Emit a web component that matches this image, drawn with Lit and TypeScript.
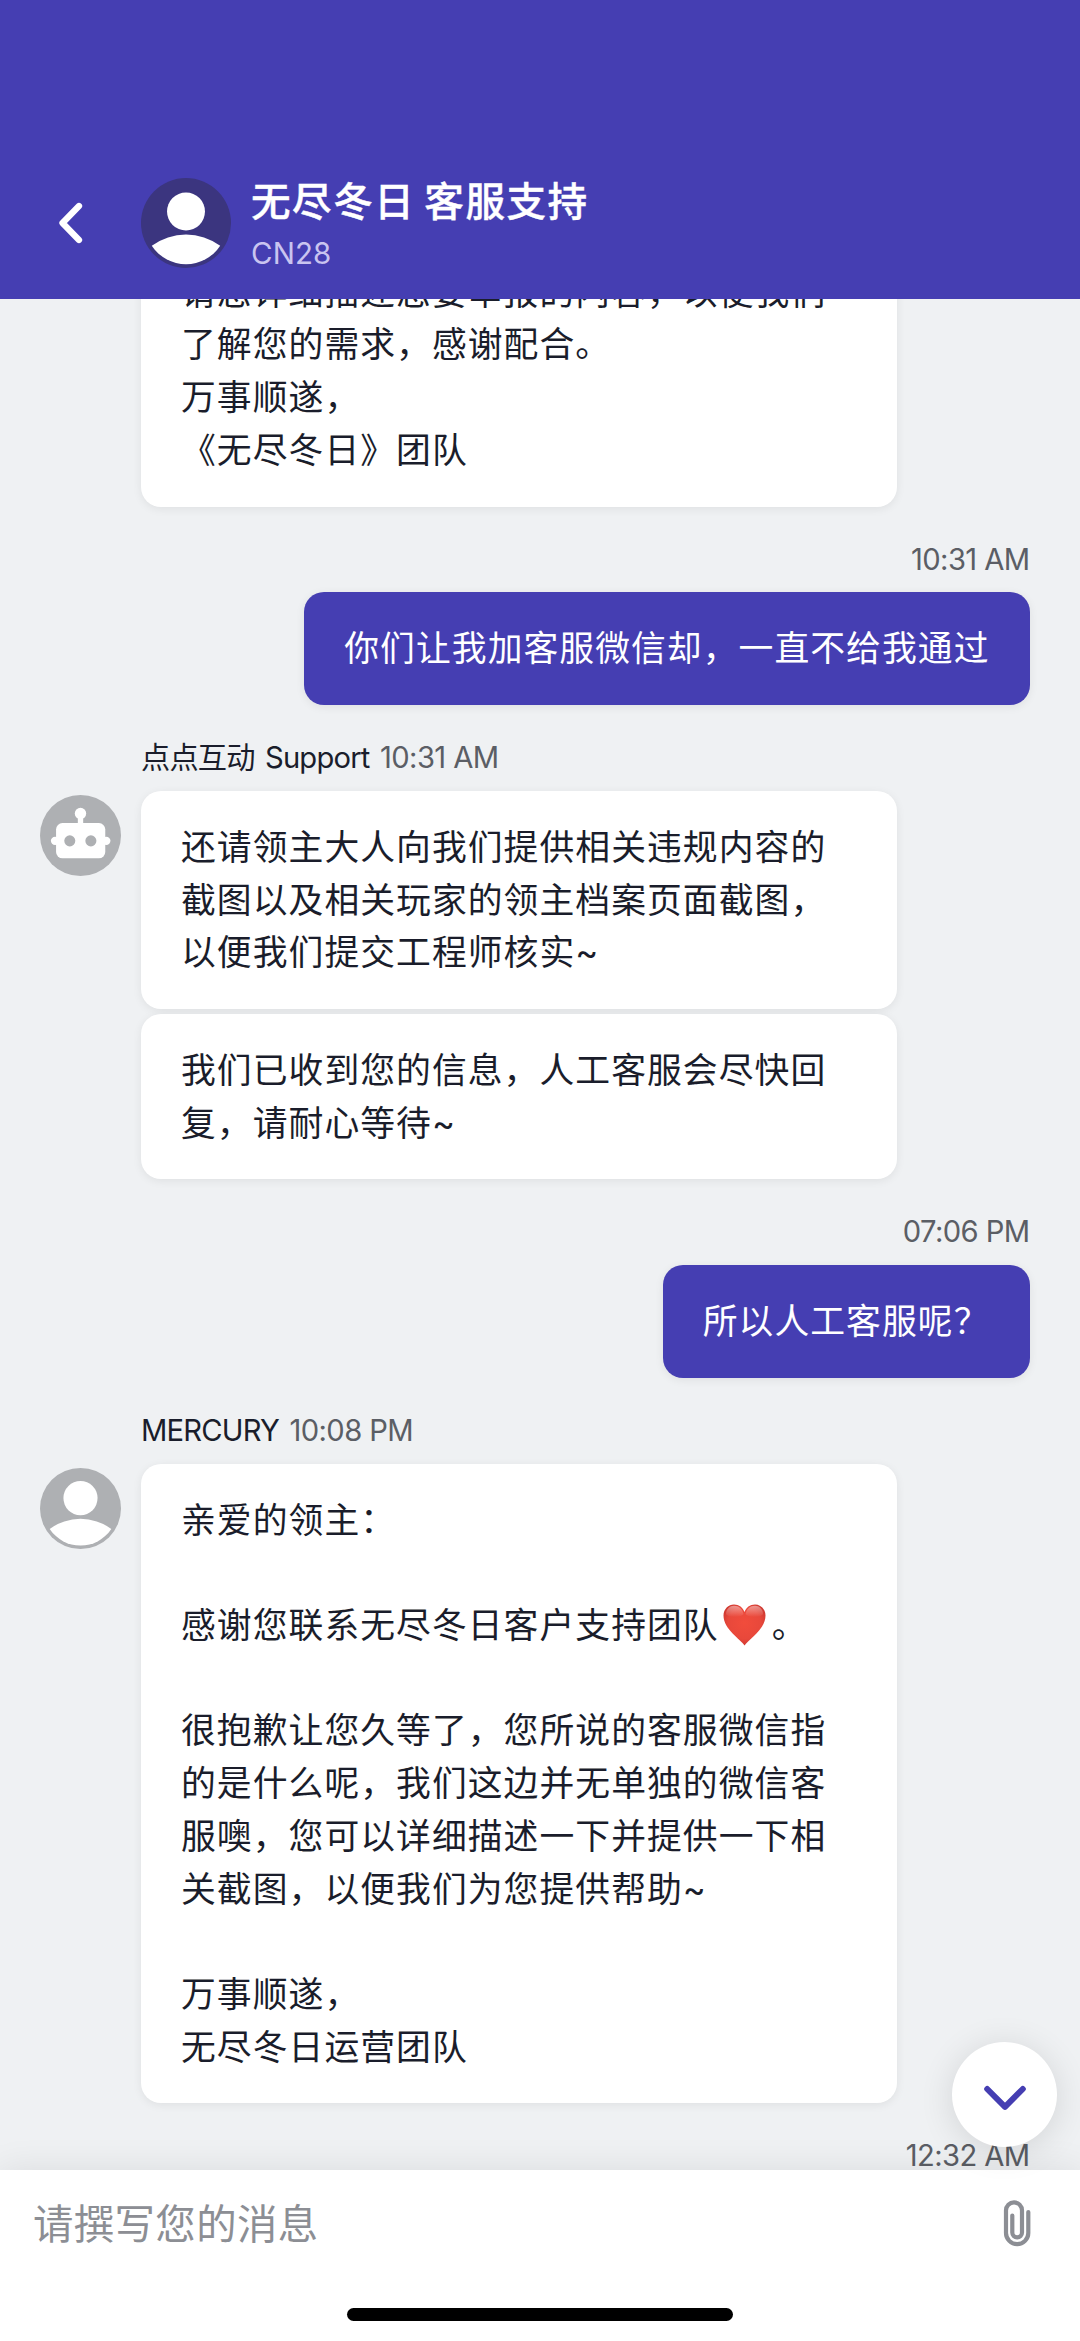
import { LitElement, html, svg, css, nothing } from "lit";
import { customElement, property } from "lit/decorators.js";

type AvatarKind = "bot" | "person";

interface MessageGroup {
  side: "in" | "out";
  author?: string;
  time: string;
  avatar?: AvatarKind;
  bubbles: string[];
}

const HEART = "\u2665";

const earlier = `请您详细描述您要举报的内容，以便我们
了解您的需求，感谢配合。
万事顺遂，
《无尽冬日》团队`;

const groups: MessageGroup[] = [
  { side: "out", time: "10:31 AM", bubbles: ["你们让我加客服微信却，一直不给我通过"] },
  {
    side: "in",
    author: "点点互动 Support",
    time: "10:31 AM",
    avatar: "bot",
    bubbles: [
      `还请领主大人向我们提供相关违规内容的
截图以及相关玩家的领主档案页面截图，
以便我们提交工程师核实~`,
      `我们已收到您的信息，人工客服会尽快回
复，请耐心等待~`,
    ],
  },
  { side: "out", time: "07:06 PM", bubbles: ["所以人工客服呢？"] },
  {
    side: "in",
    author: "MERCURY",
    time: "10:08 PM",
    avatar: "person",
    bubbles: [
      `亲爱的领主：

感谢您联系无尽冬日客户支持团队${HEART}。

很抱歉让您久等了，您所说的客服微信指
的是什么呢，我们这边并无单独的微信客
服噢，您可以详细描述一下并提供一下相
关截图，以便我们为您提供帮助~

万事顺遂，
无尽冬日运营团队`,
    ],
  },
  { side: "out", time: "12:32 AM", bubbles: [] },
];

const person = svg`
  <circle class="disc" cx="121" cy="121" r="121"/>
  <circle cx="121" cy="90" r="51" fill="#fff"/>
  <path d="M29 182A156 156 0 0 1 213 182A110 110 0 0 1 29 182Z" fill="#fff"/>`;

const bot = svg`
  <circle class="disc" cx="121" cy="121" r="121"/>
  <g fill="#fff">
    <circle cx="121" cy="55" r="17"/>
    <rect x="113" y="60" width="16" height="30"/>
    <rect x="48" y="84" width="147" height="105" rx="19"/>
    <circle cx="45" cy="137" r="12.5"/>
    <circle cx="198" cy="137" r="12.5"/>
  </g>
  <circle class="disc" cx="89" cy="137" r="16.5"/>
  <circle class="disc" cx="152" cy="137" r="16.5"/>`;

@customElement("chat-avatar")
export class ChatAvatar extends LitElement {
  @property() kind: AvatarKind = "person";

  static styles = css`
    :host { display: block; width: 81px; height: 81px; }
    svg { display: block; width: 100%; height: 100%; }
    .disc { fill: var(--disc, #aeb0b3); }
  `;

  render() {
    return html`<svg viewBox="0 0 242 242">${this.kind === "bot" ? bot : person}</svg>`;
  }
}

@customElement("chat-bubble")
export class ChatBubble extends LitElement {
  @property() text = "";

  static styles = css`
    :host {
      display: block;
      box-sizing: border-box;
      padding: 30px 40px;
      border-radius: 20px;
      background: #fff;
      color: #1a1d2b;
      box-shadow: 0 2px 10px rgba(0, 0, 0, 0.07);
      font-size: 34.8px;
      letter-spacing: 1.05px;
      line-height: 52.7px;
      white-space: pre;
    }
    .heart { width: 43px; height: 42px; margin: 0 6px 0 4px; vertical-align: -8px; }
  `;

  private heart() {
    return html`<svg class="heart" viewBox="0 0 43 42"><defs>
      <radialGradient id="red" cx="0.5" cy="0.45" r="0.6"><stop offset="0" stop-color="#f14c3c"/><stop offset="0.65" stop-color="#e8483b"/><stop offset="1" stop-color="#c9352e"/></radialGradient>
      <linearGradient id="gloss" x1="0" y1="0" x2="0" y2="1"><stop offset="0" stop-color="#fff" stop-opacity="0.45"/><stop offset="1" stop-color="#fff" stop-opacity="0"/></linearGradient></defs>
      <path d="M21.5 41.5C18 35.500 0.500 25.500 0.500 11.500C0.500 5 5.500 0.500 11 0.500C16 0.500 20 3.500 21.500 8C23 3.500 27 0.500 32 0.500C37.500 0.500 42.500 5 42.500 11.500C42.500 25.500 25 35.500 21.500 41.500Z" fill="url(#red)"/>
      <path d="M3 10C3 5 7 1.800 11 1.800C16 1.800 19.500 5 20.500 10C18 14 5 14 3 10Z" fill="url(#gloss)"/>
      <path d="M40 10C40 5 36 1.800 32 1.800C27 1.800 23.500 5 22.500 10C25 14 38 14 40 10Z" fill="url(#gloss)"/></svg>`;
  }

  render() {
    return this.text.split(HEART).map((part, i) => html`${i ? this.heart() : nothing}${part}`);
  }
}

@customElement("app-root")
export class AppRoot extends LitElement {
  static styles = css`
    :host {
      display: flex;
      flex-direction: column;
      position: relative;
      width: 1080px;
      height: 2341px;
      overflow: hidden;
      background: #eff1f3;
      font-family: Inter, "Noto Sans CJK SC", sans-serif;
    }
    .header {
      flex: none;
      display: flex;
      align-items: center;
      box-sizing: border-box;
      height: 298.7px;
      padding: 148px 59px 0 56px;
      background: #453eb2;
      z-index: 1;
    }
    .back { width: 30px; height: 46px; margin-right: 55px; }
    .header chat-avatar { width: 90px; height: 90px; --disc: #3b357f; }
    .titles { display: flex; flex-direction: column; margin: 4px 0 0 20px; }
    .title { color: #fff; font-size: 39.6px; font-weight: 500; line-height: 54px; letter-spacing: 1.5px; word-spacing: -3px; white-space: pre; -webkit-text-stroke: 0.4px #fff; }
    .subtitle { color: #c9c4f0; font-size: 29.5px; line-height: 44px; letter-spacing: 0.1px; margin: 2px 0 0 0; }
    .feed { flex: 1; min-height: 0; display: flex; flex-direction: column; }
    .earlier { flex: none; margin: -63px 0 0 141px; width: 756px; }
    .group { flex: none; display: grid; grid-template-columns: 101px 1fr; margin: 0 50.5px 0 40px; }
    .meta { grid-column: 1 / -1; box-sizing: border-box; height: 85.8px; padding: 40px 0 0 101px; font-size: 29.2px; line-height: 26px; letter-spacing: -0.6px; color: #5b5e65; white-space: pre; }
    .author { color: #1a1d2b; letter-spacing: -0.8px; word-spacing: 3px; }
    .out .meta { text-align: right; }
    .stack { grid-column: 2; display: flex; flex-direction: column; align-items: flex-start; gap: 5px; }
    .stack chat-bubble { width: 756px; }
    .out .stack { align-items: flex-end; }
    .out chat-bubble { width: auto; background: #453eb2; color: #fff; }
    .group chat-avatar { margin-top: 4px; }
    .composer {
      flex: none;
      display: flex;
      flex-direction: column;
      justify-content: space-between;
      align-items: center;
      box-sizing: border-box;
      height: 171.3px;
      padding: 24px 0 20px;
      background: #fff;
      box-shadow: 0 0 34px rgba(0, 0, 0, 0.09);
      z-index: 1;
    }
    .field { align-self: stretch; display: flex; align-items: center; justify-content: space-between; padding: 0 47px 0 33px; height: 60px; }
    .placeholder { color: #8c8e94; font-size: 40.4px; line-height: 60px; letter-spacing: 0.4px; padding-top: 2px; }
    .clip { width: 31px; height: 50px; }
    .home { width: 386px; height: 13px; border-radius: 7px; background: #000; }
    .jump {
      position: absolute;
      left: 952px;
      top: 2042px;
      width: 105px;
      height: 105px;
      padding: 0;
      border: 0;
      border-radius: 50%;
      background: #fff;
      box-shadow: 0 4px 34px rgba(0, 0, 0, 0.12);
      display: flex;
      align-items: center;
      justify-content: center;
      z-index: 2;
    }
    .down { width: 42px; height: 26px; margin-top: 6px; }
  `;

  private group(g: MessageGroup) {
    return html`<section class="group ${g.side}">
      <div class="meta">${g.author ? html`<span class="author">${g.author} </span>` : nothing}${g.time}</div>
      ${g.avatar ? html`<chat-avatar kind=${g.avatar}></chat-avatar>` : nothing}
      <div class="stack">${g.bubbles.map((t) => html`<chat-bubble .text=${t}></chat-bubble>`)}</div>
    </section>`;
  }

  render() {
    return html`
      <header class="header">
        <svg class="back" viewBox="0 0 30 46"><path d="M23 6L6.5 23L23 40" fill="none" stroke="#fff" stroke-width="6.3" stroke-linecap="round" stroke-linejoin="round"/></svg>
        <chat-avatar kind="person"></chat-avatar>
        <div class="titles">
          <div class="title">无尽冬日 客服支持</div>
          <div class="subtitle">CN28</div>
        </div>
      </header>
      <main class="feed">
        <chat-bubble class="earlier" .text=${earlier}></chat-bubble>
        ${groups.map((g) => this.group(g))}
      </main>
      <button class="jump">
        <svg class="down" viewBox="0 0 42 26"><path d="M3.2 4L21 21.8L38.8 4" fill="none" stroke="#453eb2" stroke-width="6" stroke-linecap="round" stroke-linejoin="round"/></svg>
      </button>
      <footer class="composer">
        <div class="field">
          <span class="placeholder">请撰写您的消息</span>
          <svg class="clip" viewBox="0 0 31 50"><path d="M26.3 13V34a11.15 11.15 0 0 1-22.3 0V11.3a8 8 0 0 1 16 0V33.5a4.85 4.85 0 0 1-9.7 0V16.5" fill="none" stroke="#8c8e94" stroke-width="4.2" stroke-linecap="round"/></svg>
        </div>
        <div class="home"></div>
      </footer>`;
  }
}
